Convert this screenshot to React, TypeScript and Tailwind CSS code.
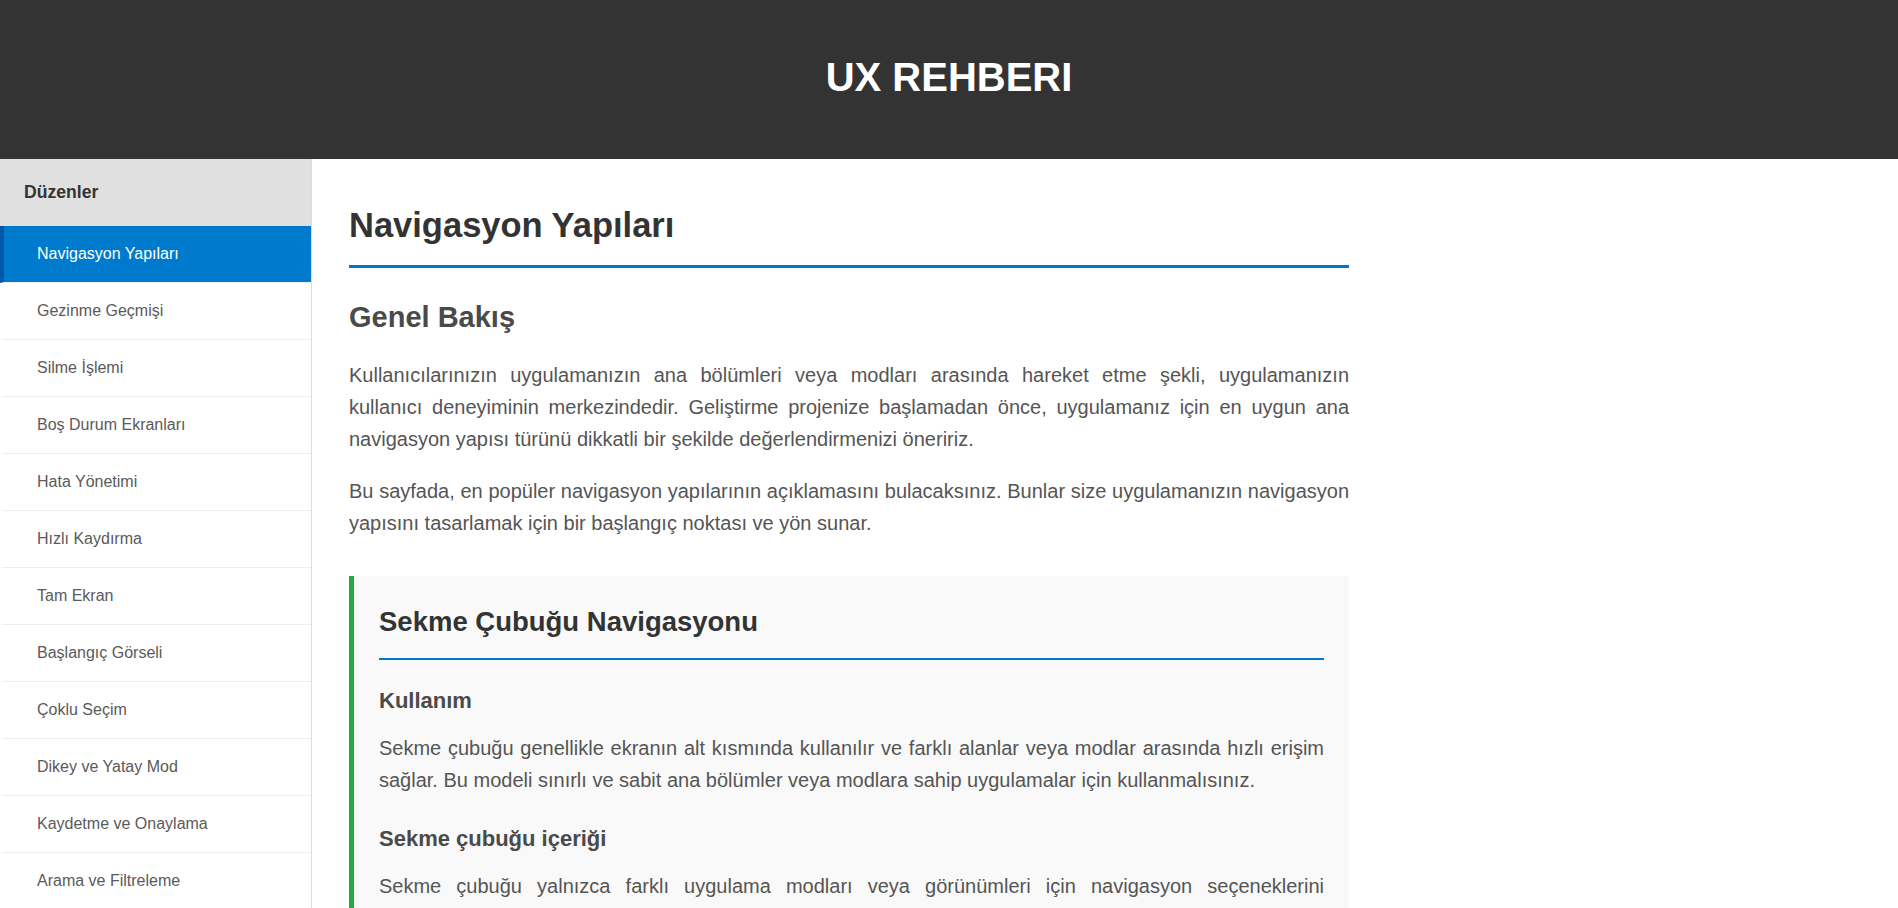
import React from "react";

const items = [
  "Navigasyon Yapıları",
  "Gezinme Geçmişi",
  "Silme İşlemi",
  "Boş Durum Ekranları",
  "Hata Yönetimi",
  "Hızlı Kaydırma",
  "Tam Ekran",
  "Başlangıç Görseli",
  "Çoklu Seçim",
  "Dikey ve Yatay Mod",
  "Kaydetme ve Onaylama",
  "Arama ve Filtreleme",
  "Yükleme Durumları",
  "Bildirimler",
];

export default function App() {
  return (
    <div className="min-h-screen bg-white" style={{ fontFamily: '"Liberation Sans", Arial, sans-serif' }}>
      <header className="h-[159px] bg-[#333333] pt-[54px] text-center">
        <h1 className="text-[40px] leading-[46px] font-bold text-white">UX REHBERI</h1>
      </header>
      <div className="flex">
        <aside className="w-[312px] shrink-0 border-r border-[#dddddd] bg-white">
          <div className="h-[67px] flex items-center pl-6 bg-[#e0e0e0] text-[17.6px] font-bold text-[#333333]">
            Düzenler
          </div>
          <ul>
            {items.map((it, i) => (
              <li
                key={it}
                className={
                  i === 0
                    ? "h-[57px] flex items-center border-l-4 border-l-[#0058a8] border-b border-b-[#eeeeee] bg-[#007acc] pl-[33px] text-[16px] text-white"
                    : "h-[57px] flex items-center border-l-4 border-l-transparent border-b border-b-[#eeeeee] pl-[33px] text-[16px] text-[#5a5a5a]"
                }
              >
                {it}
              </li>
            ))}
          </ul>
        </aside>
        <main className="flex-1 pl-[37px] pt-[46px]">
          <div className="w-[1000px]">
            <h1 className="text-[34.5px] leading-[40px] font-bold text-[#333333] pb-5 border-b-[3px] border-[#0077cc]">
              Navigasyon Yapıları
            </h1>
            <h2 className="mt-8 text-[29px] leading-[34px] font-bold text-[#4a4a4a]">Genel Bakış</h2>
            <p className="mt-[25px] text-[20px] leading-[32px] text-[#555555] text-justify">
              Kullanıcılarınızın uygulamanızın ana bölümleri veya modları arasında hareket etme şekli, uygulamanızın kullanıcı deneyiminin merkezindedir. Geliştirme projenize başlamadan önce, uygulamanız için en uygun ana navigasyon yapısı türünü dikkatli bir şekilde değerlendirmenizi öneririz.
            </p>
            <p className="mt-5 text-[20px] leading-[32px] text-[#555555] text-justify">
              Bu sayfada, en popüler navigasyon yapılarının açıklamasını bulacaksınız. Bunlar size uygulamanızın navigasyon yapısını tasarlamak için bir başlangıç noktası ve yön sunar.
            </p>
            <section className="mt-[37px] bg-[#f9f9f9] border-l-[5px] border-[#28a745] pl-[25px] pr-[25px] pt-[30px] pb-8">
              <h3 className="text-[27.5px] leading-[32px] font-bold text-[#333333] pb-5 border-b-2 border-[#0077cc]">
                Sekme Çubuğu Navigasyonu
              </h3>
              <h4 className="mt-[28px] text-[22px] leading-[26px] font-bold text-[#4a4a4a]">Kullanım</h4>
              <p className="mt-[18px] text-[20px] leading-[32px] text-[#555555] text-justify">
                Sekme çubuğu genellikle ekranın alt kısmında kullanılır ve farklı alanlar veya modlar arasında hızlı erişim sağlar. Bu modeli sınırlı ve sabit ana bölümler veya modlara sahip uygulamalar için kullanmalısınız.
              </p>
              <h4 className="mt-[30px] text-[22px] leading-[26px] font-bold text-[#4a4a4a]">Sekme çubuğu içeriği</h4>
              <p className="mt-[18px] text-[20px] leading-[32px] text-[#555555] text-justify">
                Sekme çubuğu yalnızca farklı uygulama modları veya görünümleri için navigasyon seçeneklerini içermelidir. Eylemler veya araçlar için sekme çubuğunu kullanmaktan kaçının; bunun yerine bir araç çubuğu kullanın.
              </p>
            </section>
          </div>
        </main>
      </div>
    </div>
  );
}
